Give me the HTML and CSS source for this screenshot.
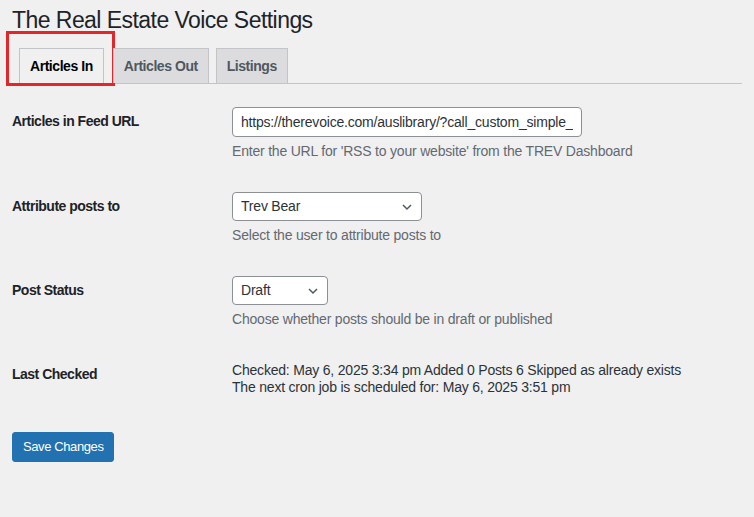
FILE: index.html
```html
<!DOCTYPE html>
<html lang="en">
<head>
<meta charset="utf-8">
<title>The Real Estate Voice Settings</title>
<link rel="stylesheet" href="styles.css">
</head>
<body>
<div class="wrap">
  <h1 class="page-title">The Real Estate Voice Settings</h1>
  <nav class="nav-tab-wrapper">
    <a class="nav-tab nav-tab-active" href="#">Articles In<span class="highlight-box"></span></a>
    <a class="nav-tab" href="#">Articles Out</a>
    <a class="nav-tab" href="#">Listings</a>
  </nav>
  <form class="settings-form">
    <table class="form-table">
      <tr>
        <th>Articles in Feed URL</th>
        <td>
          <input class="regular-text" type="text" value="https://therevoice.com/auslibrary/?call_custom_simple_rss=1">
          <p class="description">Enter the URL for 'RSS to your website' from the TREV Dashboard</p>
        </td>
      </tr>
      <tr>
        <th>Attribute posts to</th>
        <td>
          <select class="select-user"><option>Trev Bear</option></select>
          <p class="description">Select the user to attribute posts to</p>
        </td>
      </tr>
      <tr>
        <th>Post Status</th>
        <td>
          <select class="select-status"><option>Draft</option></select>
          <p class="description">Choose whether posts should be in draft or published</p>
        </td>
      </tr>
      <tr>
        <th>Last Checked</th>
        <td class="status-text">Checked: May 6, 2025 3:34 pm Added 0 Posts 6 Skipped as already exists<br>The next cron job is scheduled for: May 6, 2025 3:51 pm</td>
      </tr>
    </table>
    <p class="submit"><button type="button" class="button-primary">Save Changes</button></p>
  </form>
</div>
</body>
</html>
```
FILE: styles.css
```css
html, body {
  margin: 0;
  padding: 0;
  background: #f0f0f1;
}
body {
  font-family: "Segoe UI", "Liberation Sans", Arial, sans-serif;
  font-size: 14px;
  color: #1d2327;
  letter-spacing: -0.2px;
}
.wrap {
  padding: 0 12px;
}
.page-title {
  font-size: 23px;
  font-weight: 400;
  line-height: 1.3;
  margin: 0;
  padding: 6px 0 3px;
  color: #1d2327;
  letter-spacing: -0.55px;
}
.nav-tab-wrapper {
  display: flex;
  align-items: flex-end;
  border-bottom: 1px solid #c3c4c7;
  margin-top: 9px;
  padding-left: 0;
}
.nav-tab {
  position: relative;
  display: block;
  margin-left: 7px;
  padding: 5px 10px;
  font-size: 14px;
  line-height: 24px;
  font-weight: 600;
  letter-spacing: -0.45px;
  color: #50575e;
  background: #dcdcde;
  border: 1px solid #c3c4c7;
  border-bottom: none;
  text-decoration: none;
}
.nav-tab-active {
  background: #f0f0f1;
  color: #000;
  margin-right: 2px;
}
.highlight-box {
  position: absolute;
  left: -14px;
  top: -18px;
  width: 103px;
  height: 49px;
  border: 3px solid #e3262a;
  pointer-events: none;
}
.settings-form {
  margin-top: 8px;
}
.form-table {
  border-collapse: collapse;
  width: 100%;
}
.form-table th {
  width: 200px;
  text-align: left;
  vertical-align: top;
  padding: 20px 10px 20px 0;
  font-weight: 600;
  line-height: 1.3;
  font-size: 14px;
  letter-spacing: -0.5px;
  color: #1d2327;
}
.form-table td {
  vertical-align: top;
  padding: 15px 10px;
  line-height: 1.3;
  font-size: 14px;
}
.regular-text {
  box-sizing: border-box;
  width: 350px;
  height: 30px;
  padding: 0 8px;
  margin: 0;
  font: inherit;
  font-size: 14px;
  letter-spacing: -0.2px;
  color: #2c3338;
  background: #fff;
  border: 1px solid #8c8f94;
  border-radius: 4px;
  display: block;
}
select {
  box-sizing: border-box;
  display: block;
  height: 29px;
  margin: 0;
  font: inherit;
  font-size: 14px;
  letter-spacing: -0.2px;
  color: #2c3338;
  border: 1px solid #8c8f94;
  border-radius: 4px;
  padding: 0 24px 0 8px;
  appearance: none;
  -webkit-appearance: none;
  background: #fff url("data:image/svg+xml;charset=US-ASCII,%3Csvg%20width%3D%2220%22%20height%3D%2220%22%20xmlns%3D%22http%3A%2F%2Fwww.w3.org%2F2000%2Fsvg%22%3E%3Cpath%20d%3D%22M5%207.5l5%205%205-5%22%20fill%3D%22none%22%20stroke%3D%22%2350575e%22%20stroke-width%3D%221.8%22%2F%3E%3C%2Fsvg%3E") no-repeat right 6px top 55%;
  background-size: 16px 16px;
}
.select-user { width: 190px; }
.select-status { width: 96px; }
.description {
  margin: 4px 0 0;
  line-height: 1.5;
  color: #646970;
  font-size: 14px;
}
.form-table td.status-text {
  color: #2c3338;
  padding-top: 17px;
  line-height: 17px;
}
.submit {
  margin: 0;
  padding: 21px 0 0;
}
.button-primary {
  box-sizing: border-box;
  height: 30px;
  padding: 0 10px;
  font: inherit;
  font-size: 13px;
  letter-spacing: -0.4px;
  color: #fff;
  background: #2271b1;
  border: 1px solid #2271b1;
  border-radius: 3px;
  cursor: pointer;
}
```
